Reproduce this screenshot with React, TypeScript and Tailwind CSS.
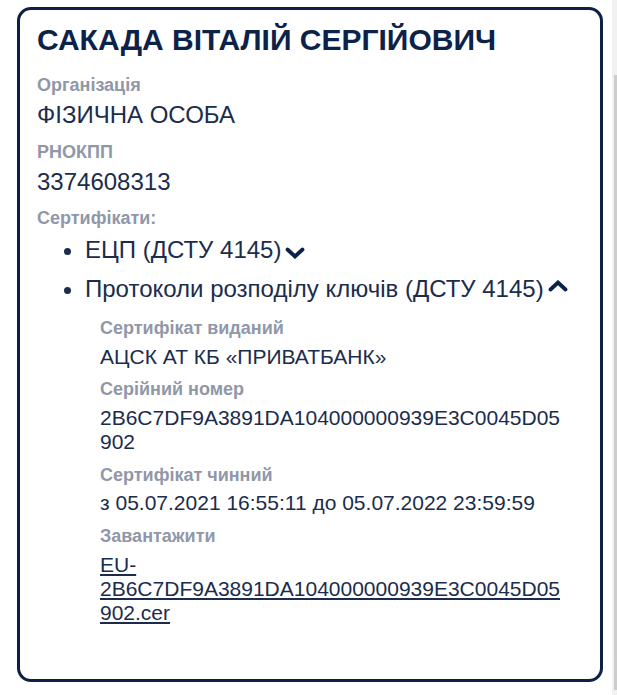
import React from "react";

function Chevron({ up }: { up?: boolean }) {
  return (
    <svg
      width="20"
      height="12"
      viewBox="0 0 20 12"
      className={up ? "inline-block ml-[4px] align-[5px]" : "inline-block ml-[4px] align-[-1px]"}
    >
      <polyline
        points={up ? "2.5,9.5 10,2.5 17.5,9.5" : "2.5,2.5 10,9.5 17.5,2.5"}
        fill="none"
        stroke="#0c2248"
        strokeWidth="3.8"
        strokeLinecap="round"
        strokeLinejoin="miter"
      />
    </svg>
  );
}

function Label({ children, className = "" }: { children: React.ReactNode; className?: string }) {
  return (
    <div className={"text-[18px] leading-[22px] font-bold text-[#8f97a8] " + className}>{children}</div>
  );
}

export default function App() {
  return (
    <div className="w-[617px] h-[695px] bg-white flex font-['Liberation_Sans',Arial,sans-serif] overflow-hidden">
      <div className="w-[612px] pl-[17px] pt-[7px] pr-[9px]">
        <div className="h-[675px] border-[3px] border-[#0d2145] rounded-[14px] pl-[17px] pr-[17px] pt-[12px]">
          <h1 className="text-[30px] leading-[36px] font-bold text-[#0c2248]">САКАДА ВІТАЛІЙ СЕРГІЙОВИЧ</h1>

          <Label className="mt-[16px]">Організація</Label>
          <div className="mt-[5px] text-[24px] leading-[28px] text-[#1b2c4d]">ФІЗИЧНА ОСОБА</div>

          <Label className="mt-[12px]">РНОКПП</Label>
          <div className="mt-[5px] text-[24px] leading-[28px] text-[#1b2c4d]">3374608313</div>

          <Label className="mt-[11px]">Сертифікати:</Label>
          <ul className="list-disc pl-[48px] mt-[7px] text-[24px] leading-[28px] text-[#1b2c4d]">
            <li>
              <span>ЕЦП (ДСТУ 4145)</span>
              <Chevron />
            </li>
            <li className="mt-[11px]">
              <span>Протоколи розподілу ключів (ДСТУ 4145)</span>
              <Chevron up />
            </li>
          </ul>

          <div className="ml-[63px] mr-[18px] mt-[14px] text-[#1b2c4d]">
            <Label>Сертифікат виданий</Label>
            <div className="mt-[6px] text-[21px] leading-[24px]">АЦСК АТ КБ «ПРИВАТБАНК»</div>

            <Label className="mt-[9px]">Серійний номер</Label>
            <div className="mt-[6px] text-[21px] leading-[24px] break-words">
              2B6C7DF9A3891DA104000000939E3C0045D05902
            </div>

            <Label className="mt-[10px]">Сертифікат чинний</Label>
            <div className="mt-[5px] text-[21px] leading-[24px]">з 05.07.2021 16:55:11 до 05.07.2022 23:59:59</div>

            <Label className="mt-[10px]">Завантажити</Label>
            <div className="mt-[6px] text-[21px] leading-[24px] break-words">
              <a href="#" className="underline text-[#1b2c4d]">
                EU-2B6C7DF9A3891DA104000000939E3C0045D05902.cer
              </a>
            </div>
          </div>
        </div>
      </div>
      <div className="w-[5px] h-full bg-[#f1f1f1] flex flex-col">
        <div className="mt-[75px] ml-[2px] w-[3px] h-[615px] bg-[#cdcdcd]" />
      </div>
    </div>
  );
}
